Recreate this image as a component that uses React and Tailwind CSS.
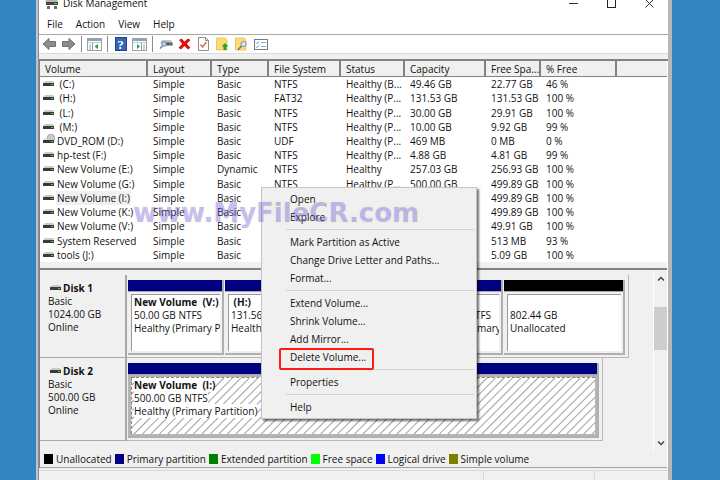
import clsx from 'clsx';

const columns = [
  { label: 'Volume', width: 'w-[108px]' },
  { label: 'Layout', width: 'w-[64px]' },
  { label: 'Type', width: 'w-[57px]' },
  { label: 'File System', width: 'w-[72px]' },
  { label: 'Status', width: 'w-[64px]' },
  { label: 'Capacity', width: 'w-[81px]' },
  { label: 'Free Spa...', width: 'w-[55px]' },
  { label: '% Free', width: 'w-[76px]' },
  { label: '', width: '' },
];

const volumes = [
  ['\u00a0(C:)', 'Simple', 'Basic', 'NTFS', 'Healthy (B...', '49.46 GB', '22.77 GB', '46 %'],
  ['\u00a0(H:)', 'Simple', 'Basic', 'FAT32', 'Healthy (P...', '131.53 GB', '131.53 GB', '100 %'],
  ['\u00a0(L:)', 'Simple', 'Basic', 'NTFS', 'Healthy (P...', '30.00 GB', '29.91 GB', '100 %'],
  ['\u00a0(M:)', 'Simple', 'Basic', 'NTFS', 'Healthy (P...', '10.00 GB', '9.92 GB', '99 %'],
  ['DVD_ROM (D:)', 'Simple', 'Basic', 'UDF', 'Healthy (P...', '469 MB', '0 MB', '0 %'],
  ['hp-test (F:)', 'Simple', 'Basic', 'NTFS', 'Healthy (P...', '4.88 GB', '4.81 GB', '99 %'],
  ['New Volume (E:)', 'Simple', 'Dynamic', 'NTFS', 'Healthy', '257.03 GB', '256.93 GB', '100 %'],
  ['New Volume (G:)', 'Simple', 'Basic', 'NTFS', 'Healthy (P...', '500.00 GB', '499.89 GB', '100 %'],
  ['New Volume (I:)', 'Simple', 'Basic', 'NTFS', 'Healthy (P...', '500.00 GB', '499.89 GB', '100 %'],
  ['New Volume (K:)', 'Simple', 'Basic', 'NTFS', 'Healthy (P...', '500.00 GB', '499.89 GB', '100 %'],
  ['New Volume (V:)', 'Simple', 'Basic', 'NTFS', 'Healthy (P...', '50.00 GB', '49.91 GB', '100 %'],
  ['System Reserved', 'Simple', 'Basic', 'NTFS', 'Healthy (S...', '549 MB', '513 MB', '93 %'],
  ['tools (J:)', 'Simple', 'Basic', 'NTFS', 'Healthy (P...', '5.11 GB', '5.09 GB', '100 %'],
];

const menuItems = [
  'Open', 'Explore', null,
  'Mark Partition as Active', 'Change Drive Letter and Paths...', 'Format...', null,
  'Extend Volume...', 'Shrink Volume...', 'Add Mirror...', 'Delete Volume...', null,
  'Properties', null,
  'Help',
];

const legend = [
  ['Unallocated', 'bg-black'],
  ['Primary partition', 'bg-[#000080]'],
  ['Extended partition', 'bg-[#008000]'],
  ['Free space', 'bg-[#00ff00]'],
  ['Logical drive', 'bg-[#0000ff]'],
  ['Simple volume', 'bg-[#808000]'],
];

const DriveIcon = ({ disc }) => (
  <svg width="12" height="14" viewBox="0 0 12 14" className="shrink-0" aria-hidden="true">
    {disc && (
      <>
        <circle cx="8" cy="4" r="3.7" fill="#d4d4d4" stroke="#8f8f8f" strokeWidth="0.8" />
        <circle cx="8" cy="4" r="1.3" fill="#fff" stroke="#999" strokeWidth="0.7" />
      </>
    )}
    <path d="M2 4h8l1.500 2H.5z" fill="#c9c9c9" opacity={disc ? 0.6 : 1} />
    <rect x="0" y="6" width="11" height="3" fill="#3a3a3a" />
    <rect x="8" y="7" width="2" height="1" fill="#2fe03a" />
  </svg>
);

const ArrowIcon = ({ flip }) => (
  <svg width="15" height="14" viewBox="0 0 15 14" aria-hidden="true">
    <path
      d="M1 7 7 1.500v3h6.500v5H7v3z" fill="#8c8c8c" stroke="#707070" strokeWidth="1" strokeLinejoin="round"
      transform={flip ? 'matrix(-1 0 0 1 15 0)' : undefined}
    />
  </svg>
);

const PaneIcon = ({ flip }) => (
  <svg width="15" height="13" viewBox="0 0 15 13" aria-hidden="true">
    <rect x="0.5" y="0.5" width="14" height="12" fill="#fff" stroke="#9aa3ab" />
    <path d="M1 1h13v2H1z" fill="#93a3b2" />
    <path d="M1 4.500h13" stroke="#c3ccd4" />
    {flip ? (
      <>
        <path d="M9.500 5v7M11 7h2M11 9h2M11 11h2" stroke="#8ca0b3" />
        <path d="M5 6v5l3-2.500z" fill="#22a83a" />
      </>
    ) : (
      <>
        <path d="M5.500 5v7M2 7h2M2 9h2M2 11h2" stroke="#8ca0b3" />
        <path d="M11 6v5L7.500 8.500z" fill="#22a83a" />
      </>
    )}
  </svg>
);

const HelpIcon = () => (
  <span className="flex h-3.5 w-3 items-center justify-center border border-[#1d438d] bg-[#3465bd] font-['Liberation_Serif',serif] text-[13px] leading-none font-bold text-white">
    ?
  </span>
);

const ConnectIcon = () => (
  <svg width="14" height="12" viewBox="0 0 14 12" aria-hidden="true">
    <path d="M3 2h9l1.500 3h-12z" fill="#c2c6ca" />
    <path d="M2 4.500h11.500v3H5z" fill="#50565c" />
    <path d="M10 6h2" stroke="#31d544" />
    <circle cx="5" cy="6" r="2.300" fill="#bcd9ef" stroke="#69889f" />
    <path d="M3.500 8 1 10.500" stroke="#7d7d7d" strokeWidth="1.500" />
  </svg>
);

const DeleteIcon = () => (
  <svg width="13" height="12" viewBox="0 0 13 12" aria-hidden="true">
    <path d="M1 2 3.500.5l3 3 3.500-3L12.500 2 8.800 5.700l3.700 4-2.500 1.800-3.500-3.500L3 11.500.5 9.700l3.700-4z" fill="#d8120f" />
  </svg>
);

const CheckPageIcon = () => (
  <svg width="11" height="14" viewBox="0 0 11 14" aria-hidden="true">
    <path d="M.5.500h7l3 3v10H.5z" fill="#fff" stroke="#8e8e8e" />
    <path d="M7.500.500v3h3" fill="none" stroke="#8e8e8e" />
    <path d="m2.500 7.500 2 2.500 4-5" fill="none" stroke="#e2713c" strokeWidth="1.500" />
  </svg>
);

const FolderIcon = ({ search }) => (
  <svg width="13" height="14" viewBox="0 0 13 14" aria-hidden="true">
    <path d="M.5 1h9l1.500 2v10H.5z" fill="#fbdd78" stroke="#e3be56" strokeWidth="0.8" />
    {search ? (
      <>
        <circle cx="8.500" cy="7" r="2.600" fill="#d5eaf7" stroke="#7193ad" />
        <path d="m6.500 9-3.500 4" stroke="#777" strokeWidth="1.500" />
      </>
    ) : (
      <path d="m9 6 3.500 3.500h-2V13h-3V9.500h-2z" fill="#2ca02c" />
    )}
  </svg>
);

const OptionsIcon = () => (
  <svg width="14" height="11" viewBox="0 0 14 11" aria-hidden="true">
    <rect x="0.500" y="0.500" width="13" height="10" fill="#fff" stroke="#6f7f8c" />
    <path d="m2 3.500 1 1 2-2M2 7.500l1 1 2-2" fill="none" stroke="#3f8fd2" />
    <path d="M7 3.500h5M7 7.500h5" stroke="#9caab5" />
  </svg>
);

const ToolButton = ({ label, children }) => (
  <button type="button" aria-label={label} className="flex h-4 w-[19px] items-center justify-center">
    {children}
  </button>
);

const ToolDivider = () => <span className="mx-[3px] h-4 w-px bg-[#8c8c8c]" />;

const TitleBar = () => (
  <header className="flex h-[13px] items-end justify-between overflow-hidden pl-1.5">
    <div className="flex h-5 items-center gap-1">
      <svg width="14" height="14" viewBox="0 0 14 14" aria-hidden="true">
        <path d="M2 2h9l2 4H0z" fill="#b5b5b5" />
        <path d="M1 6h12v3H1z" fill="#444" />
        <path d="M2 10h3v3H2zM9 10h3v3H9z" fill="#6d6d6d" />
        <path d="M9 7.500h3" stroke="#31d544" />
      </svg>
      <h1 className="leading-5">Disk Management</h1>
    </div>
    <div className="flex h-5 items-center">
      <button type="button" aria-label="Minimize" className="flex w-[38px] justify-center">
        <svg width="9" height="9" viewBox="0 0 9 9"><path d="M0 4.500h9" stroke="#333" /></svg>
      </button>
      <button type="button" aria-label="Maximize" className="flex w-[38px] justify-center">
        <svg width="9" height="9" viewBox="0 0 9 9"><rect x="0.500" y="0.500" width="8" height="8" fill="none" stroke="#222" /></svg>
      </button>
      <button type="button" aria-label="Close" className="flex w-[38px] justify-center">
        <svg width="9" height="9" viewBox="0 0 9 9"><path d="m.5.500 8 8M8.500.500l-8 8" stroke="#333" /></svg>
      </button>
    </div>
  </header>
);

const MenuBar = () => (
  <nav className="flex h-[22px] items-center gap-[13px] border-b border-[#a9a9a9] pl-2">
    {['File', 'Action', 'View', 'Help'].map((item) => (
      <button key={item} type="button">{item}</button>
    ))}
  </nav>
);

const Toolbar = () => (
  <div className="flex h-[19px] items-center border-b border-[#dcdcdc] pl-px">
    <ToolButton label="Back"><ArrowIcon /></ToolButton>
    <ToolButton label="Forward"><ArrowIcon flip /></ToolButton>
    <ToolDivider />
    <ToolButton label="Show console tree"><PaneIcon /></ToolButton>
    <ToolDivider />
    <ToolButton label="Help topics"><HelpIcon /></ToolButton>
    <ToolButton label="Show action pane"><PaneIcon flip /></ToolButton>
    <ToolDivider />
    <ToolButton label="Connect"><ConnectIcon /></ToolButton>
    <ToolButton label="Delete"><DeleteIcon /></ToolButton>
    <ToolButton label="Check"><CheckPageIcon /></ToolButton>
    <ToolButton label="Open folder"><FolderIcon /></ToolButton>
    <ToolButton label="Find"><FolderIcon search /></ToolButton>
    <ToolButton label="Options"><OptionsIcon /></ToolButton>
  </div>
);

const VolumeTable = () => (
  <table className="h-[201px] w-full table-fixed border-separate border-spacing-0 text-left">
    <thead>
      <tr className="h-4 bg-[#f0f0f0]">
        {columns.map(({ label, width }) => (
          <th
            key={label}
            className={clsx('h-4 border-b border-[#828282] p-0 pl-[5px] leading-[14px] font-normal whitespace-nowrap', width, label && 'border-r-2')}
          >
            {label}
          </th>
        ))}
      </tr>
    </thead>
    <tbody>
      {volumes.map(([name, ...cells]) => (
        <tr key={name}>
          <td className="p-0 pl-[3px] whitespace-nowrap">
            <div className="flex h-3.5 items-center gap-px">
              <DriveIcon disc={name.startsWith('DVD')} />
              <span className={clsx('px-px', name.includes('(I:)') && 'bg-[#f0f0f0]')}>{name}</span>
            </div>
          </td>
          {cells.map((cell, i) => (
            <td key={i} className="p-0 pl-[5px] whitespace-nowrap">{cell}</td>
          ))}
          <td className="p-0" />
        </tr>
      ))}
    </tbody>
  </table>
);

const Partition = ({ title, size, status, unallocated, selected, className }) => (
  <div className={clsx('flex flex-col overflow-hidden border-r-2 border-b-2 border-[#b0b0b0]', className)}>
    <div className={clsx('h-[11px] shrink-0', unallocated ? 'bg-black' : 'bg-[#000080]')} />
    <div className={clsx('flex flex-1 border-t border-[#a8a8a8] p-0.5 pl-[3px]', selected ? 'bg-[#b5b5b5]' : 'bg-[#f0f0f0]')}>
      <div
        className={clsx(
          'flex-1 overflow-hidden border-t border-l pt-px pl-0.5 leading-[13px] whitespace-nowrap',
          selected
            ? 'border-dashed border-[#888] bg-[repeating-linear-gradient(135deg,#fff_0px,#fff_4px,#a0a0a0_5px,#fff_6px)]'
            : 'border-[#9a9a9a] bg-white',
        )}
      >
        <p className="h-[13px] font-bold whitespace-pre"><span className={clsx(selected && 'bg-white')}>{title}</span></p>
        <p><span className={clsx(selected && 'bg-white')}>{size}</span></p>
        <p><span className={clsx(selected && 'bg-white')}>{status}</span></p>
      </div>
    </div>
  </div>
);

const DiskRow = ({ name, size, width, children }) => (
  <section className="flex h-[83px]">
    <div className="w-[87px] shrink-0 border-r-2 border-b border-[#a8a8a8] pt-1.5 pl-2 leading-[13px]">
      <div className="flex items-center gap-px pl-0.5">
        <DriveIcon />
        <h2 className="font-bold">{name}</h2>
      </div>
      <p>Basic</p>
      <p>{size}</p>
      <p>Online</p>
    </div>
    <div className={clsx('flex gap-px border-r border-b border-[#b8b8b8] pt-[5px] pr-[3px] pb-0.5 pl-px', width)}>{children}</div>
  </section>
);

const ScrollBar = () => (
  <div className="flex w-[14px] flex-col items-center border-l border-white bg-[#f0f0f0] py-1">
    <svg width="8" height="8" viewBox="0 0 8 8" aria-hidden="true"><path d="m1 5.500 3-3 3 3" fill="none" stroke="#444" strokeWidth="1.500" /></svg>
    <div className="mt-6 h-[43px] w-full bg-[#cdcdcd]" />
    <svg className="mt-auto" width="8" height="8" viewBox="0 0 8 8" aria-hidden="true"><path d="m1 2.500 3 3 3-3" fill="none" stroke="#444" strokeWidth="1.500" /></svg>
  </div>
);

const DiskPane = () => (
  <div className="flex h-[180px] bg-[#f0f0f0]">
    <div className="min-w-0 flex-1 pt-1">
      <DiskRow name="Disk 1" size="1024.00 GB" width="w-[502px]">
        <Partition className="w-[96px] shrink-0" title="New Volume  (V:)" size="50.00 GB NTFS" status="Healthy (Primary Partition)" />
        <Partition className="w-[140px] shrink-0" title=" (H:)" size="131.56 GB FAT32" status="Healthy (Primary Partition)" />
        <Partition className="w-[50px] shrink-0" title=" (L:)" size="30.00 GB" status="Healthy" />
        <Partition className="w-[86px] shrink-0" title=" (M:)" size="10.00 GB NTFS" status="Healthy (Primary Partition)" />
        <Partition className="flex-1" title="" size="802.44 GB" status="Unallocated" unallocated />
      </DiskRow>
      <DiskRow name="Disk 2" size="500.00 GB" width="w-[476px]">
        <Partition className="flex-1" title="New Volume  (I:)" size="500.00 GB NTFS" status="Healthy (Primary Partition)" selected />
      </DiskRow>
    </div>
    <ScrollBar />
  </div>
);

const Legend = () => (
  <ul className="flex h-[17px] items-center gap-[3px] border-b border-[#a0a0a0] pl-1">
    {legend.map(([label, color]) => (
      <li key={label} className="flex items-center gap-[3px] whitespace-nowrap">
        <span className={clsx('h-2.5 w-[9px]', color)} />
        {label}
      </li>
    ))}
  </ul>
);

const ContextMenu = () => (
  <div role="menu" className="absolute top-[187px] left-[261px] w-[216px] border border-[#c4c4c4] bg-[#f0f0f0] py-0.5 shadow-[2px_2px_2px_rgba(0,0,0,0.55)]">
    {menuItems.map((item, i) => (item ? (
      <button
        key={item} type="button" role="menuitem"
        className="relative block h-[18px] w-full pl-7 text-left leading-[18px] whitespace-nowrap"
      >
        {item}
        {item.startsWith('Delete') && (
          <span className="absolute top-0 left-[17px] h-[22px] w-[95px] rounded-xs border-2 border-[#ff1a12]" />
        )}
      </button>
    ) : (
      <div key={i} role="separator" className="flex h-[7px] items-center pr-0.5 pl-6"><span className="h-px w-full bg-[#d0d0d0]" /></div>
    )))}
  </div>
);

const App = () => (
  <div className="relative min-h-screen overflow-hidden bg-[#3484c0] pr-12 pl-9 font-['Open_Sans','Noto_Sans',sans-serif] text-[10px] leading-[14px] text-[#111]">
    <main className="flex min-h-screen flex-col border-r-4 border-l-2 border-r-[#b4b8bb] border-l-[#c0c4c8] bg-white">
      <div className="flex flex-1 flex-col border-l border-[#8c8c8c]">
        <TitleBar />
        <MenuBar />
        <Toolbar />
        <div className="h-[5px] bg-[#f0f0f0]" />
        <div className="border-t-2 border-l border-[#828282] pr-px">
          <VolumeTable />
          <div className="h-2 border-b-2 border-[#828282] bg-[#f0f0f0]" />
          <div className="h-px bg-[#f0f0f0]" />
          <DiskPane />
          <div className="bg-[#f0f0f0]"><Legend /></div>
        </div>
        <footer className="flex flex-1 bg-[#f0f0f0] pt-0.5">
          <span className="flex-1 border-t border-r border-[#dadada]" />
          <span className="w-[111px] border-t border-r border-[#dadada]" />
          <span className="w-[73px] border-t border-[#dadada]" />
        </footer>
      </div>
    </main>
    <ContextMenu />
    <p className="pointer-events-none absolute top-[201px] left-[133px] font-['DejaVu_Sans',sans-serif] text-[26px] leading-6 font-bold text-[#5848d8] opacity-35 [text-shadow:0_0_3px_#ffd880]">
      www.MyFileCR.com
    </p>
  </div>
);

export default App;
